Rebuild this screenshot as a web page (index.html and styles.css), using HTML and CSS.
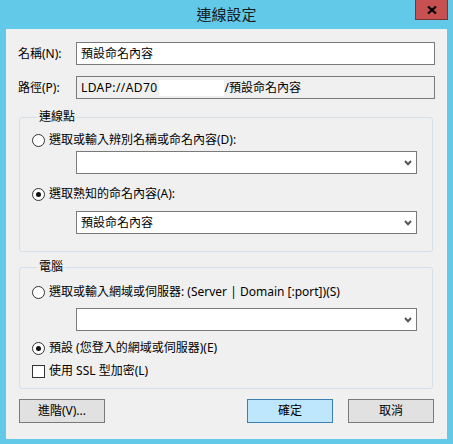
FILE: index.html
```html
<!DOCTYPE html>
<html lang="zh-Hant">
<head>
<meta charset="utf-8">
<title>連線設定</title>
<link rel="stylesheet" href="styles.css">
</head>
<body>
<div class="window">
  <div class="titlebar">
    <span class="title">連線設定</span>
    <div class="close">
      <svg width="10" height="8" viewBox="0 0 10 8"><path d="M1 0.5 L9 7.5 M9 0.5 L1 7.5" stroke="#000" stroke-width="2.2" fill="none"/></svg>
    </div>
  </div>
  <div class="client">
    <div class="field-row">
      <span class="field-label">名稱(N):</span>
      <div class="textbox">預設命名內容</div>
    </div>
    <div class="field-row path-row">
      <span class="field-label">路徑(P):</span>
      <div class="textbox readonly"><span class="ldap">LDAP://AD70</span><span class="redact"></span>/預設命名內容</div>
    </div>

    <fieldset class="group group-conn">
      <legend>連線點</legend>
      <div class="option first"><span class="radio"></span>選取或輸入辨別名稱或命名內容(D):</div>
      <div class="combo combo-after-opt1">
        <span class="combo-text"></span>
        <svg class="chev" width="8" height="6" viewBox="0 0 8 6"><path d="M1 1 L4 4.2 L7 1" stroke="#555" stroke-width="2" fill="none"/></svg>
      </div>
      <div class="option gap10"><span class="radio checked"></span>選取熟知的命名內容(A):</div>
      <div class="combo gap7">
        <span class="combo-text">預設命名內容</span>
        <svg class="chev" width="8" height="6" viewBox="0 0 8 6"><path d="M1 1 L4 4.2 L7 1" stroke="#555" stroke-width="2" fill="none"/></svg>
      </div>
    </fieldset>

    <fieldset class="group group-pc">
      <legend>電腦</legend>
      <div class="option first"><span class="radio"></span>選取或輸入網域或伺服器: (Server | Domain [:port])(S)</div>
      <div class="combo gap6">
        <span class="combo-text"></span>
        <svg class="chev" width="8" height="6" viewBox="0 0 8 6"><path d="M1 1 L4 4.2 L7 1" stroke="#555" stroke-width="2" fill="none"/></svg>
      </div>
      <div class="option gap7"><span class="radio checked"></span>預設 (您登入的網域或伺服器)(E)</div>
      <div class="option gap3"><span class="checkbox"></span>使用 SSL 型加密(L)</div>
    </fieldset>

    <div class="buttons">
      <div class="btn">進階(V)...</div>
      <div class="btn-spacer"></div>
      <div class="btn primary">確定</div>
      <div class="btn">取消</div>
    </div>
  </div>
</div>
</body>
</html>
```

FILE: styles.css
```css
* { box-sizing: border-box; }
html, body { margin: 0; padding: 0; }
body {
  width: 453px;
  height: 444px;
  overflow: hidden;
  font-family: "Noto Sans", "Noto Sans CJK TC", sans-serif;
  font-size: 12px;
  color: #000;
}
.window {
  width: 453px;
  height: 444px;
  background: #63c9e9;
  padding: 0 6px 5px 6px;
  display: flex;
  flex-direction: column;
}
.titlebar {
  position: relative;
  height: 29px;
  flex: none;
  display: flex;
  align-items: center;
  justify-content: center;
}
.title {
  font-family: "Noto Sans CJK TC", sans-serif;
  font-size: 15px;
  line-height: 20px;
  color: #1a1a1a;
  margin-top: -1px;
}
.close {
  position: absolute;
  top: 0;
  right: -1px;
  width: 33px;
  height: 20px;
  background: #c75050;
  border: 1px solid #7c3434;
  border-top: none;
  display: flex;
  align-items: center;
  justify-content: center;
}
.client {
  flex: 1;
  background: #f0f0f0;
  padding: 13px 12px 0 12px;
  display: flex;
  flex-direction: column;
}
.field-row {
  display: flex;
  align-items: center;
  height: 23px;
}
.path-row { margin-top: 11px; }
.field-label {
  width: 58px;
  flex: none;
  line-height: 16px;
}
.textbox {
  flex: 1;
  height: 23px;
  border: 1px solid #7a7a7a;
  background: #fff;
  padding: 0 4px;
  line-height: 21px;
  white-space: nowrap;
  display: flex;
  align-items: center;
}
.textbox.readonly { background: #f0f0f0; }
.ldap { letter-spacing: 0.4px; }
.redact {
  display: inline-block;
  width: 65px;
  height: 16px;
  margin-left: 2px;
  background: #fff;
}
.group {
  margin: 0 2px 0 1px;
  border: 1px solid #d5dfe5;
  border-radius: 3px;
  min-inline-size: 0;
}
.group legend {
  padding: 0 2px;
  margin-left: 5px;
  line-height: 16px;
  height: 16px;
}
.group-conn {
  margin-top: 10px;
  padding: 5px 15px 17px 12px;
}
.group-pc {
  margin-top: 7px;
  padding: 7px 15px 7px 12px;
}
.option {
  display: flex;
  align-items: center;
  height: 20px;
  line-height: 20px;
  white-space: nowrap;
}
.radio {
  width: 13px;
  height: 13px;
  border: 1px solid #333;
  border-radius: 50%;
  background: #fff;
  margin-right: 4px;
  flex: none;
  display: flex;
  align-items: center;
  justify-content: center;
}
.radio.checked::after {
  content: "";
  width: 5px;
  height: 5px;
  border-radius: 50%;
  background: #111;
}
.checkbox {
  width: 13px;
  height: 13px;
  border: 1px solid #333;
  background: #fff;
  margin-right: 4px;
  flex: none;
}
.combo {
  margin-left: 44px;
  height: 23px;
  border: 1px solid #7a7a7a;
  background: #fff;
  display: flex;
  align-items: center;
  padding: 0 4px 0 4px;
}
.combo-after-opt1 { margin-top: 1px; }
.combo-text { flex: 1; line-height: 21px; }
.chev { flex: none; }
.gap10 { margin-top: 10px; }
.gap7 { margin-top: 7px; }
.gap6 { margin-top: 6px; }
.gap3 { margin-top: 3px; }
.buttons {
  margin: 10px 1px 0 1px;
  display: flex;
  gap: 15px;
}
.btn-spacer { flex: 1; margin-left: -15px; }
.btn {
  width: 86px;
  height: 24px;
  border: 1px solid #7a7a7a;
  background: #e1e1e1;
  display: flex;
  align-items: center;
  justify-content: center;
  line-height: 16px;
}
.btn.primary {
  background: #bee6fd;
  border-color: #3c7fb1;
}
```
